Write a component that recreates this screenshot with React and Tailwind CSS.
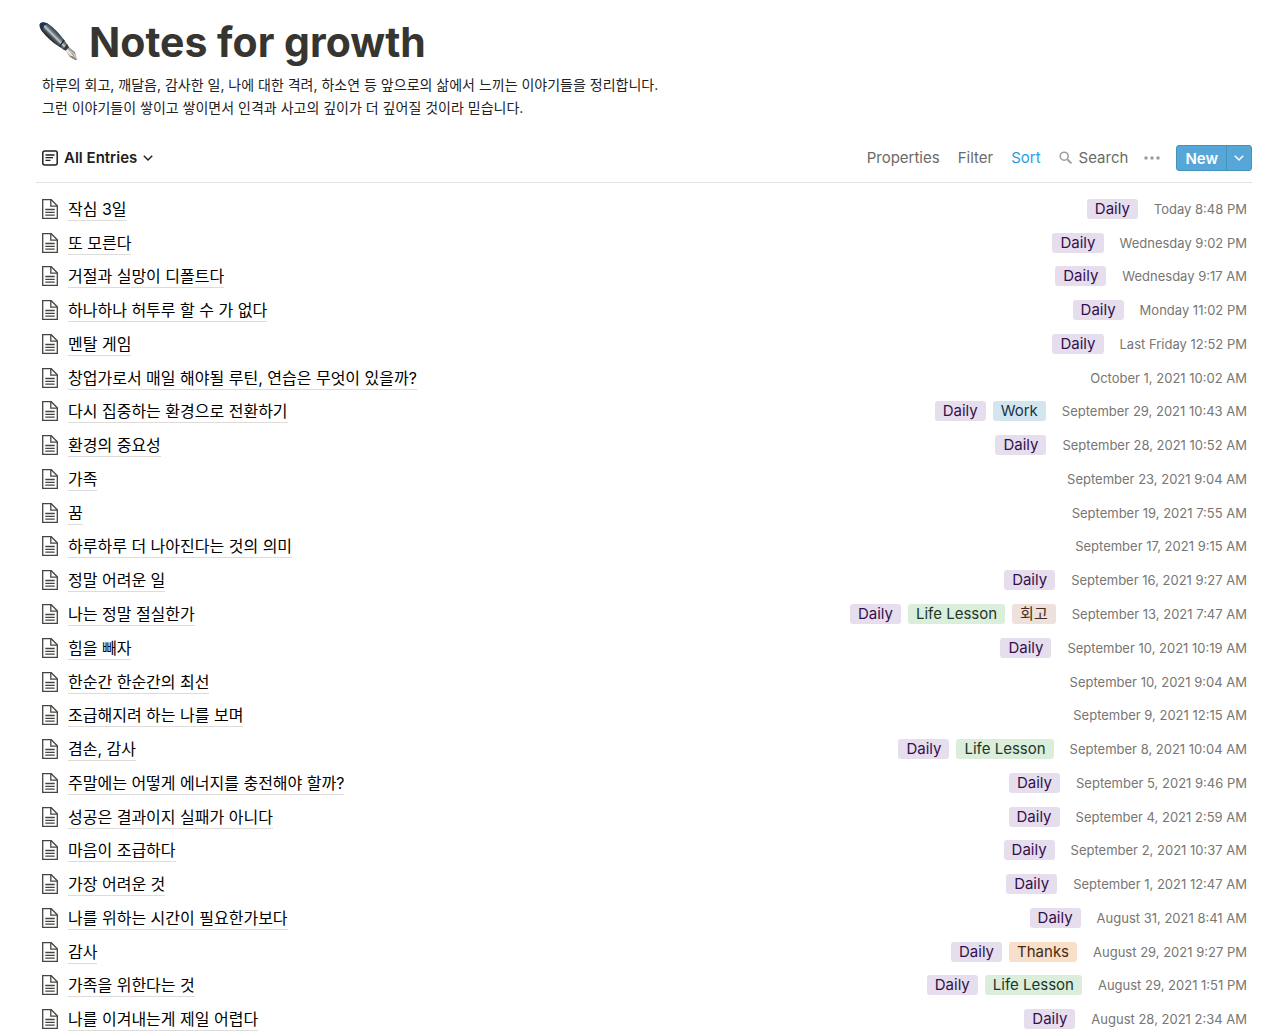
import clsx from 'clsx'

const entries = [
  { title: '작심 3일', tags: ['Daily'], date: 'Today 8:48 PM' },
  { title: '또 모른다', tags: ['Daily'], date: 'Wednesday 9:02 PM' },
  { title: '거절과 실망이 디폴트다', tags: ['Daily'], date: 'Wednesday 9:17 AM' },
  { title: '하나하나 허투루 할 수 가 없다', tags: ['Daily'], date: 'Monday 11:02 PM' },
  { title: '멘탈 게임', tags: ['Daily'], date: 'Last Friday 12:52 PM' },
  { title: '창업가로서 매일 해야될 루틴, 연습은 무엇이 있을까?', tags: [], date: 'October 1, 2021 10:02 AM' },
  { title: '다시 집중하는 환경으로 전환하기', tags: ['Daily', 'Work'], date: 'September 29, 2021 10:43 AM' },
  { title: '환경의 중요성', tags: ['Daily'], date: 'September 28, 2021 10:52 AM' },
  { title: '가족', tags: [], date: 'September 23, 2021 9:04 AM' },
  { title: '꿈', tags: [], date: 'September 19, 2021 7:55 AM' },
  { title: '하루하루 더 나아진다는 것의 의미', tags: [], date: 'September 17, 2021 9:15 AM' },
  { title: '정말 어려운 일', tags: ['Daily'], date: 'September 16, 2021 9:27 AM' },
  { title: '나는 정말 절실한가', tags: ['Daily', 'Life Lesson', '회고'], date: 'September 13, 2021 7:47 AM' },
  { title: '힘을 빼자', tags: ['Daily'], date: 'September 10, 2021 10:19 AM' },
  { title: '한순간 한순간의 최선', tags: [], date: 'September 10, 2021 9:04 AM' },
  { title: '조급해지려 하는 나를 보며', tags: [], date: 'September 9, 2021 12:15 AM' },
  { title: '겸손, 감사', tags: ['Daily', 'Life Lesson'], date: 'September 8, 2021 10:04 AM' },
  { title: '주말에는 어떻게 에너지를 충전해야 할까?', tags: ['Daily'], date: 'September 5, 2021 9:46 PM' },
  { title: '성공은 결과이지 실패가 아니다', tags: ['Daily'], date: 'September 4, 2021 2:59 AM' },
  { title: '마음이 조급하다', tags: ['Daily'], date: 'September 2, 2021 10:37 AM' },
  { title: '가장 어려운 것', tags: ['Daily'], date: 'September 1, 2021 12:47 AM' },
  { title: '나를 위하는 시간이 필요한가보다', tags: ['Daily'], date: 'August 31, 2021 8:41 AM' },
  { title: '감사', tags: ['Daily', 'Thanks'], date: 'August 29, 2021 9:27 PM' },
  { title: '가족을 위한다는 것', tags: ['Daily', 'Life Lesson'], date: 'August 29, 2021 1:51 PM' },
  { title: '나를 이겨내는게 제일 어렵다', tags: ['Daily'], date: 'August 28, 2021 2:34 AM' },
]

const tagColors = {
  Daily: 'bg-[#e6deed] text-[#33104d]',
  Work: 'bg-[#d3e5ef] text-[#183347]',
  'Life Lesson': 'bg-[#dbeddb] text-[#1c3829]',
  회고: 'bg-[#eee0da] text-[#442a1e]',
  Thanks: 'bg-[#f7dfca] text-[#49290e]',
}

function PenIcon() {
  return (
    <svg viewBox="0 0 40 40" className="h-10 w-10 shrink-0" aria-hidden="true">
      <defs>
        <linearGradient id="barrel" x1="19" y1="10" x2="11" y2="18" gradientUnits="userSpaceOnUse">
          <stop offset="0" stopColor="#2a343c" />
          <stop offset="0.3" stopColor="#65717a" />
          <stop offset="0.5" stopColor="#c3cbd0" />
          <stop offset="0.65" stopColor="#59636b" />
          <stop offset="1" stopColor="#11161b" />
        </linearGradient>
        <linearGradient id="nib" x1="35" y1="30" x2="30" y2="36" gradientUnits="userSpaceOnUse">
          <stop offset="0" stopColor="#8b8f90" />
          <stop offset="0.45" stopColor="#f1eee7" />
          <stop offset="1" stopColor="#7c7268" />
        </linearGradient>
      </defs>
      <path d="M1.200 1.200C3-.6 7.400.3 10.800 2.900C17 7.500 23.500 14.800 28.800 23.200L24.900 27.700C15.500 22.200 7.100 14.800 2.600 8.700C.7 6-.2 2.900 1.200 1.200Z" fill="url(#barrel)" />
      <path d="M1.300 1.200C3.200-.6 7.200.2 10.500 2.800C6.700 2 3.900 3 4.400 8.300L3.800 10C.8 6.300 0 2.700 1.300 1.200Z" fill="#20344e" />
      <path d="M24.800 17.300L20.200 24.300L21 24.900L25.600 18.400Z" fill="#18222a" />
      <path d="M28 22L30.300 25.500L27.100 29L24 27.200Z" fill="#343a3e" />
      <path d="M29.900 25.300L36 29.900L38.200 36.900L36.900 38.300L30.400 34.500L26.700 28.700Z" fill="url(#nib)" />
      <path d="M32.500 31.300L37.900 37.500" stroke="#77716a" strokeWidth="0.700" />
      <path d="M30.400 34.500L36.900 38.300L37.600 37.400L33.500 34.300Z" fill="#85705a" />
    </svg>
  )
}

function ViewIcon() {
  return (
    <svg viewBox="0 0 16 16" className="h-4 w-4" fill="none" stroke="currentColor" aria-hidden="true">
      <rect x="0.800" y="1" width="14.400" height="14" rx="2" strokeWidth="1.500" />
      <path d="M3.500 5H12.500M3.500 7.700H11M3.500 10.400H8.500" strokeWidth="1.300" />
    </svg>
  )
}

function PageIcon() {
  return (
    <svg viewBox="0 0 16 20" className="h-5 w-4 shrink-0 text-[#454440]" fill="none" stroke="currentColor" strokeWidth="1.300" aria-hidden="true">
      <path d="M.7.7H9.200L15.300 6.800V19.300H.7Z" />
      <path d="M8.800.7V7.200H15.300M3.300 10.500H12.700M3.300 13.300H12.700M3.300 16.100H12.700" />
    </svg>
  )
}

function ChevronIcon() {
  return (
    <svg viewBox="0 0 10 10" className="h-[10px] w-[10px]" fill="none" stroke="currentColor" strokeWidth="1.500" aria-hidden="true">
      <path d="M.8 2.800L5 7L9.200 2.800" />
    </svg>
  )
}

function SearchIcon() {
  return (
    <svg viewBox="0 0 14 14" className="h-[14px] w-[14px] text-[#a09f9c]" fill="none" stroke="currentColor" aria-hidden="true">
      <circle cx="5.200" cy="5.200" r="4" strokeWidth="1.600" />
      <path d="M8.200 8.200L12.400 12.400" strokeWidth="2" />
    </svg>
  )
}

function DotsIcon() {
  return (
    <svg viewBox="0 0 16 4" className="h-1 w-4 text-[#a09f9c]" fill="currentColor" aria-hidden="true">
      <circle cx="2" cy="2" r="1.800" />
      <circle cx="8" cy="2" r="1.800" />
      <circle cx="14" cy="2" r="1.800" />
    </svg>
  )
}

function Toolbar() {
  return (
    <div className="-mr-[5px] -ml-[6px] flex h-[50px] shrink-0 items-center justify-between border-b border-[#e3e2e0] pl-[6px]">
      <button type="button" className="flex items-center gap-[6px] text-[15px] leading-6 font-semibold">
        <ViewIcon />
        <span className="pt-px">All Entries</span>
        <ChevronIcon />
      </button>
      <div className="flex items-center text-[15px] leading-6 text-[#6b6a67]">
        <button type="button" className="pt-px">Properties</button>
        <button type="button" className="ml-[18px] pt-px">Filter</button>
        <button type="button" className="ml-[18px] pt-px text-[#2d9cdb]">Sort</button>
        <button type="button" className="ml-[18px] flex items-center gap-[6px] pt-px">
          <SearchIcon />
          <span>Search</span>
        </button>
        <button type="button" aria-label="More options" className="ml-4 flex items-center">
          <DotsIcon />
        </button>
        <div className="ml-4 flex h-[26px] overflow-hidden rounded-[3px] border border-[#4393bf] bg-[#56a6d8] text-white">
          <button type="button" className="border-r border-[#4393bf] px-2 pt-px font-semibold">New</button>
          <button type="button" aria-label="New entry options" className="flex w-6 items-center justify-center">
            <ChevronIcon />
          </button>
        </div>
      </div>
    </div>
  )
}

function EntryRow({ entry }) {
  return (
    <li className="flex items-center justify-between">
      <a href="#" className="flex items-center gap-[10px]">
        <PageIcon />
        <span className="border-b border-[#dddcda] pt-px text-[16px] leading-[22px] whitespace-nowrap text-black">{entry.title}</span>
      </a>
      <div className="flex items-center">
        <div className="flex gap-[7px]">
          {entry.tags.map((tag) => (
            <span key={tag} className={clsx('rounded-[3px] px-2 text-[15px] leading-5 whitespace-nowrap', tagColors[tag])}>
              {tag}
            </span>
          ))}
        </div>
        <time className="ml-4 text-[13px] leading-5 whitespace-nowrap text-[#777673]">{entry.date}</time>
      </div>
    </li>
  )
}

export default function App() {
  return (
    <main className="flex min-h-screen flex-col bg-white pr-[33px] pl-[42px] font-['Inter','Noto_Sans_CJK_KR',sans-serif] text-[#22211e]">
      <header className="pt-4">
        <div className="-ml-[3px] flex items-center gap-[10px]">
          <PenIcon />
          <h1 className="text-[41px] leading-[52px] font-bold text-[#37352f]">Notes for growth</h1>
        </div>
        <p className="mt-[5px] text-[14px] leading-[23px]">
          하루의 회고, 깨달음, 감사한 일, 나에 대한 격려, 하소연 등 앞으로의 삶에서 느끼는 이야기들을 정리합니다.
          <br />
          그런 이야기들이 쌓이고 쌓이면서 인격과 사고의 깊이가 더 깊어질 것이라 믿습니다.
        </p>
      </header>
      <div className="h-[14px] shrink-0" />
      <Toolbar />
      <ul className="grid flex-1 auto-rows-fr pt-[9px]">
        {entries.map((entry) => (
          <EntryRow key={entry.title} entry={entry} />
        ))}
      </ul>
    </main>
  )
}
